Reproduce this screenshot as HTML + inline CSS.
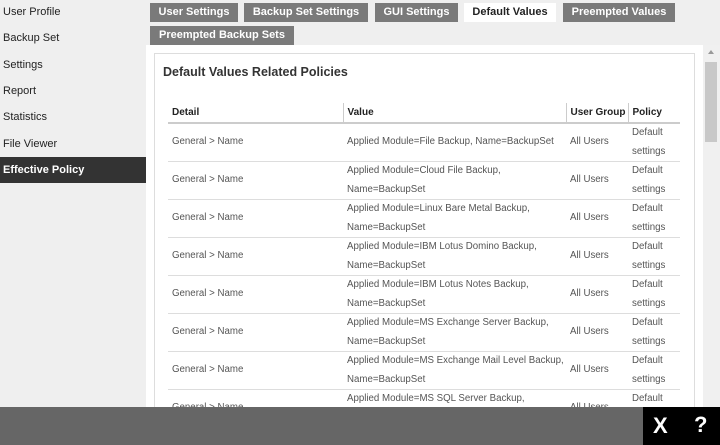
<!DOCTYPE html><html style="overflow:hidden;width:720px;height:445px"><head><style>
*{margin:0;padding:0;box-sizing:border-box}
body{width:720px;height:445px;overflow:hidden;background:#efefef;font-family:"Liberation Sans",Arial,sans-serif;position:relative}
.side div{position:absolute;left:0;width:146px;height:26px;line-height:26px;padding-left:3px;font-size:11px;color:#222}
.side .act{background:#333;color:#fff;font-weight:bold}
.tab{position:absolute;height:19px;line-height:19px;background:#7a7a7a;color:#fff;font-weight:bold;font-size:11px;text-align:center}
.tab.on{background:#fff;color:#222}
.panel{position:absolute;left:146px;top:45px;width:557px;height:400px;background:#fff;overflow:hidden}
.box{position:absolute;left:8px;top:8px;width:541px;height:400px;border:1px solid #ddd}
h2{position:absolute;left:8px;top:11px;font-size:12.5px;font-weight:bold;color:#333}
table{position:absolute;left:13px;top:49px;border-collapse:collapse;font-size:9.7px;color:#555}
th{text-align:left;font-size:10px;color:#222;height:20px;border-bottom:2px solid #ccc;padding-left:4px}
th+th{border-left:1px solid #ccc}
td{height:37.7px;border-bottom:1px solid #ddd;padding-left:4px;line-height:18.5px;vertical-align:middle}
.sb{position:absolute;left:703px;top:45px;width:17px;height:400px;background:#f0f0f0}
.bar{position:absolute;left:0;top:407px;width:720px;height:38px;background:#666}
.blk{position:absolute;left:643px;top:407px;width:77px;height:38px;background:#000;color:#fff;font-weight:bold;font-size:22px}
</style></head><body>
<div class="side">
<div style="top:-1px">User Profile</div><div style="top:25px">Backup Set</div><div style="top:52px">Settings</div><div style="top:78px">Report</div><div style="top:104px">Statistics</div><div style="top:131px">File Viewer</div><div class="act" style="top:157px">Effective Policy</div>
</div>
<div class="tab" style="left:150px;top:3px;width:88px">User Settings</div>
<div class="tab" style="left:244px;top:3px;width:124px">Backup Set Settings</div>
<div class="tab" style="left:375px;top:3px;width:83px">GUI Settings</div>
<div class="tab on" style="left:464px;top:3px;width:92px">Default Values</div>
<div class="tab" style="left:563px;top:3px;width:112px">Preempted Values</div>
<div class="tab" style="left:150px;top:26px;width:144px">Preempted Backup Sets</div>
<div class="panel"><div class="box"><h2>Default Values Related Policies</h2>
<table>
<tr><th style="width:175px">Detail</th><th style="width:223px">Value</th><th style="width:62px">User Group</th><th style="width:52px">Policy</th></tr>
<tr><td>General &gt; Name</td><td>Applied Module=File Backup, Name=BackupSet</td><td>All Users</td><td>Default<br>settings</td></tr>
<tr><td>General &gt; Name</td><td>Applied Module=Cloud File Backup,<br>Name=BackupSet</td><td>All Users</td><td>Default<br>settings</td></tr>
<tr><td>General &gt; Name</td><td>Applied Module=Linux Bare Metal Backup,<br>Name=BackupSet</td><td>All Users</td><td>Default<br>settings</td></tr>
<tr><td>General &gt; Name</td><td>Applied Module=IBM Lotus Domino Backup,<br>Name=BackupSet</td><td>All Users</td><td>Default<br>settings</td></tr>
<tr><td>General &gt; Name</td><td>Applied Module=IBM Lotus Notes Backup,<br>Name=BackupSet</td><td>All Users</td><td>Default<br>settings</td></tr>
<tr><td>General &gt; Name</td><td>Applied Module=MS Exchange Server Backup,<br>Name=BackupSet</td><td>All Users</td><td>Default<br>settings</td></tr>
<tr><td>General &gt; Name</td><td>Applied Module=MS Exchange Mail Level Backup,<br>Name=BackupSet</td><td>All Users</td><td>Default<br>settings</td></tr>
<tr><td>General &gt; Name</td><td>Applied Module=MS SQL Server Backup,<br>Name=BackupSet</td><td>All Users</td><td>Default<br>settings</td></tr>
</table></div></div>
<div class="sb"><div style="position:absolute;left:5px;top:5px;border:3px solid transparent;border-bottom:4px solid #999;border-top:0"></div><div style="position:absolute;left:2px;top:17px;width:12px;height:80px;background:#c8c8c8"></div></div>
<div class="bar"></div>
<div class="blk"><span style="position:absolute;left:10px;top:6px">X</span><span style="position:absolute;left:51px;top:5px">?</span></div>
</body></html>
